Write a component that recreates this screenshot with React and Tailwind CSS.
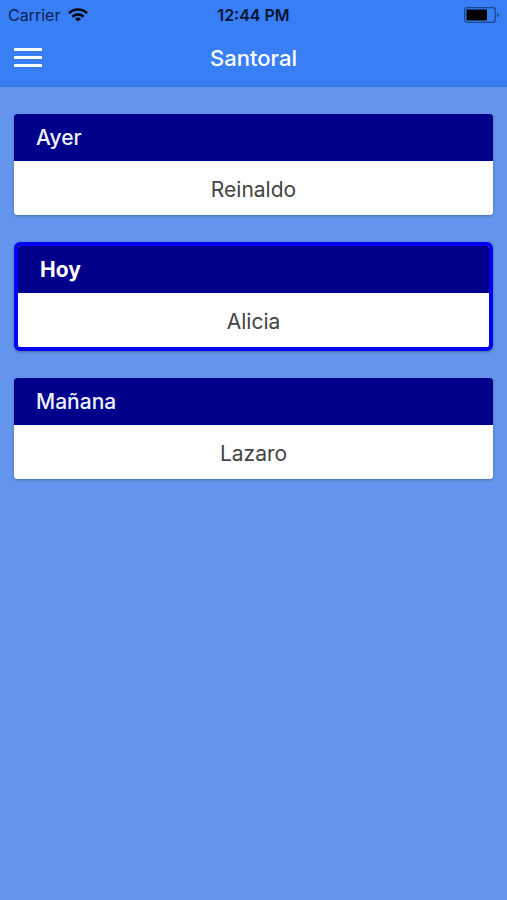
import React from "react";

const days = [
    { label: "Ayer", name: "Reinaldo" },
    { label: "Hoy", name: "Alicia", today: true },
    { label: "Mañana", name: "Lazaro" },
];

const StatusBar = () => {
    return (
        <div className="grid grid-cols-3 items-center h-[30px] px-2 text-base leading-5">
            <div className="flex items-center gap-2 text-[#0b2352]">
                <span>Carrier</span>
                <svg width="20" height="14" viewBox="0 0 20 14" fill="none" stroke="#020814" strokeWidth="2.6" aria-hidden="true">
                    <path d="M1 5.2C6 .3 14 .3 19 5.2" />
                    <path d="M4.4 8.7c3.2-3.1 8-3.1 11.2 0" />
                    <path d="M10 13.6l-3-2.9c1.7-1.6 4.3-1.6 6 0z" fill="#020814" stroke="none" />
                </svg>
            </div>

            <span className="text-center font-semibold text-[#051534] whitespace-nowrap">12:44 PM</span>

            <svg className="justify-self-end" width="35" height="16" viewBox="0 0 35 16" fill="none" aria-hidden="true">
                <rect x="0.7" y="0.7" width="30.6" height="14.6" rx="2.5" stroke="#1d4790" strokeWidth="1.3" />
                <rect x="2.5" y="2.5" width="20.5" height="11" rx="0.8" fill="#000" />
                <path d="M33 5.5c2.6.6 2.6 4.4 0 5z" fill="#1d4790" />
            </svg>
        </div>
    );
};

const DayCard = ({ label, name, today }) => {
    return (
        <section
            className={
                today
                    ? "rounded-md border-4 border-[#0000f5] bg-white shadow-[0_1px_3px_rgba(0,0,0,0.3)] overflow-hidden"
                    : "rounded-[3px] bg-white shadow-[0_1px_3px_rgba(0,0,0,0.3)] overflow-hidden"
            }
        >
            <h2
                className={
                    today
                        ? "px-[22px] pt-2 pb-[7px] bg-[#00008b] text-white leading-8 font-bold"
                        : "px-[22px] pt-2 pb-[7px] bg-[#00008b] text-[#eef2ff] leading-8 font-medium"
                }
            >
                {label}
            </h2>
            <p className="pt-[13px] pb-[9px] text-center text-[#444] leading-8">{name}</p>
        </section>
    );
};

const App = () => {
    return (
        <div className="min-h-screen bg-[#6495ed] font-['Inter',sans-serif]">
            {/* Header */}
            <header className="bg-[#387ef5] border-b border-[#3474dc]">
                <StatusBar />
                <div className="grid grid-cols-3 items-center h-14 px-[14px]">
                    <button type="button" aria-label="Menú" className="justify-self-start cursor-pointer">
                        <svg width="28" height="20" viewBox="0 0 28 20" fill="#fff" aria-hidden="true">
                            <rect width="28" height="3" rx="0.5" />
                            <rect y="8" width="28" height="3" rx="0.5" />
                            <rect y="16" width="28" height="3" rx="0.5" />
                        </svg>
                    </button>
                    <h1 className="text-center text-[22px] leading-7 font-medium text-white">Santoral</h1>
                </div>
            </header>

            {/* Cards */}
            <main className="flex flex-col gap-[27px] px-[14px] py-[27px] text-[21px]">
                {days.map((day) => (
                    <DayCard key={day.label} {...day} />
                ))}
            </main>
        </div>
    );
};

export default App;
